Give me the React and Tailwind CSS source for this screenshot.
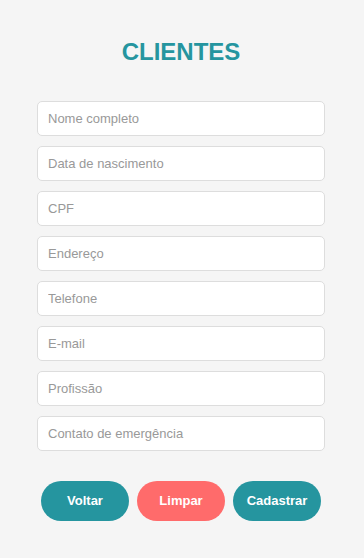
const fields = [
  "Nome completo",
  "Data de nascimento",
  "CPF",
  "Endereço",
  "Telefone",
  "E-mail",
  "Profissão",
  "Contato de emergência",
];

export default function App() {
  return (
    <div className="min-h-screen bg-[#f5f5f5] font-['Liberation_Sans',Arial,sans-serif]">
      <div className="w-[288px] ml-[37px] pt-[38px]">
        <h1 className="text-center text-[24px] leading-[28px] font-bold text-[#25959f]">CLIENTES</h1>

        <form className="mt-[35px] flex flex-col gap-[10px]" onSubmit={(e) => e.preventDefault()}>
          {fields.map((f) => (
            <input
              key={f}
              placeholder={f}
              className="h-[35px] w-full rounded-[5px] border border-[#dddddd] bg-white px-[10px] text-[13px] text-[#333] placeholder:text-[#999999] outline-none"
            />
          ))}

          <div className="mt-[20px] flex justify-center gap-[8px]">
            <button type="button" className="h-[40px] w-[88px] rounded-full bg-[#25959f] text-[13px] font-bold text-white">
              Voltar
            </button>
            <button type="reset" className="h-[40px] w-[88px] rounded-full bg-[#ff6b6b] text-[13px] font-bold text-white">
              Limpar
            </button>
            <button type="submit" className="h-[40px] w-[88px] rounded-full bg-[#25959f] text-[13px] font-bold text-white">
              Cadastrar
            </button>
          </div>
        </form>
      </div>
    </div>
  );
}
